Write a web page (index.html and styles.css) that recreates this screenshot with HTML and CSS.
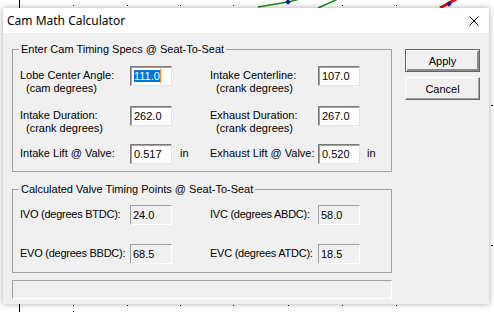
FILE: index.html
```html
<!DOCTYPE html>
<html lang="en">
<head>
    <meta charset="UTF-8">
    <meta name="viewport" content="width=device-width, initial-scale=1.0">
    <title>Cam Math Calculator</title>
    <link rel="stylesheet" href="styles.css">
</head>
<body>
    <!-- chart that sits behind the dialog -->
    <svg class="chart" width="494" height="312" viewBox="0 0 494 312">
        <line x1="19.5" y1="0" x2="19.5" y2="312" stroke="#000" stroke-width="1"/>
        <g fill="#000">
            <rect x="73" y="5" width="1" height="1"/>
            <rect x="127" y="5" width="1" height="1"/>
            <rect x="180" y="5" width="1" height="1"/>
            <rect x="233" y="5" width="1" height="1"/>
            <rect x="342" y="5" width="1" height="1"/>
            <rect x="396" y="5" width="1" height="1"/>
            <rect x="73" y="305" width="1" height="1"/>
            <rect x="73" y="311" width="1" height="1"/>
            <rect x="127" y="305" width="1" height="1"/>
            <rect x="180" y="305" width="1" height="1"/>
            <rect x="233" y="305" width="1" height="1"/>
            <rect x="288" y="305" width="1" height="1"/>
            <rect x="342" y="305" width="1" height="1"/>
            <rect x="396" y="305" width="1" height="1"/>
            <rect x="491" y="105" width="2" height="1"/>
            <rect x="491" y="245" width="2" height="1"/>
        </g>
        <polyline points="258,7 288,2 300,-1" fill="none" stroke="#1a8a1a" stroke-width="1.5"/>
        <polyline points="318,8 338,-1" fill="none" stroke="#1a8a1a" stroke-width="1.5"/>
        <polyline points="440,8 458,-2" fill="none" stroke="#e01010" stroke-width="3"/>
        <rect x="286" y="0" width="4" height="4" fill="#1a1a8a" transform="rotate(45 288 2)"/>
        <rect x="447" y="2" width="4" height="4" fill="#1a1a8a" transform="rotate(45 449 4)"/>
    </svg>

    <div class="dialog">
        <div class="titlebar">
            <span class="title">Cam Math Calculator</span>
            <svg class="close" width="10" height="10" viewBox="0 0 10 10">
                <path d="M0.5 0.5 L9.5 9.5 M9.5 0.5 L0.5 9.5" stroke="#000" stroke-width="1" fill="none"/>
            </svg>
        </div>

        <div class="dialog-body">
            <div class="main">
                <fieldset class="group specs">
                    <legend>Enter Cam Timing Specs @ Seat-To-Seat</legend>
                    <div class="fields">
                        <div class="label">Lobe Center Angle:<span class="sub">(cam degrees)</span></div>
                        <div class="edit"><span class="selected">111.0</span><span class="caret"></span></div>
                        <div></div>
                        <div class="label">Intake Centerline:<span class="sub">(crank degrees)</span></div>
                        <div class="edit">107.0</div>
                        <div></div>

                        <div class="label">Intake Duration:<span class="sub">(crank degrees)</span></div>
                        <div class="edit">262.0</div>
                        <div></div>
                        <div class="label">Exhaust Duration:<span class="sub">(crank degrees)</span></div>
                        <div class="edit">267.0</div>
                        <div></div>

                        <div class="label">Intake Lift @ Valve:</div>
                        <div class="edit">0.517</div>
                        <div class="unit">in</div>
                        <div class="label">Exhaust Lift @ Valve:</div>
                        <div class="edit">0.520</div>
                        <div class="unit unit-right">in</div>
                    </div>
                </fieldset>

                <fieldset class="group results">
                    <legend>Calculated Valve Timing Points @ Seat-To-Seat</legend>
                    <div class="fields">
                        <div class="label">IVO (degrees BTDC):</div>
                        <div class="edit readonly">24.0</div>
                        <div></div>
                        <div class="label">IVC (degrees ABDC):</div>
                        <div class="edit readonly">58.0</div>
                        <div></div>

                        <div class="label">EVO (degrees BBDC):</div>
                        <div class="edit readonly">68.5</div>
                        <div></div>
                        <div class="label">EVC (degrees ATDC):</div>
                        <div class="edit readonly">18.5</div>
                        <div></div>
                    </div>
                </fieldset>

                <div class="status"></div>
            </div>

            <div class="buttons">
                <button class="btn default">Apply</button>
                <button class="btn">Cancel</button>
            </div>
        </div>
    </div>
</body>
</html>
```

FILE: styles.css
```css
body {
    margin: 0;
    width: 494px;
    height: 312px;
    overflow: hidden;
    position: relative;
    background-color: #fff;
    font-family: "Liberation Sans", Arial, sans-serif;
    font-size: 11px;
    color: #000;
}
.chart {
    position: absolute;
    left: 0;
    top: 0;
}
.dialog {
    position: absolute;
    left: 3px;
    top: 8px;
    width: 486px;
    height: 296px;
    background-color: #f0f0f0;
    box-shadow: 0 0 6px rgba(0,0,0,0.35);
    display: flex;
    flex-direction: column;
}
.titlebar {
    height: 25px;
    flex: none;
    background-color: #fff;
    display: flex;
    align-items: center;
    justify-content: space-between;
    padding: 0 10px 0 4px;
}
.title {
    font-family: "Noto Sans", "Liberation Sans", sans-serif;
    font-size: 12px;
}
.dialog-body {
    flex: 1;
    display: flex;
    padding: 10px 9px 0 9px;
}
.main {
    width: 380px;
}
.group {
    margin: 0;
    padding: 10px 0 7px 0;
    border: 1px solid #a0a0a0;
    min-width: 0;
}
.group legend {
    margin-left: 6px;
    padding: 0 2px;
    line-height: 13px;
}
.results {
    margin-top: 11px;
    padding-top: 9px;
    padding-bottom: 8px;
}
.results .label {
    letter-spacing: -0.25px;
}
.fields {
    display: grid;
    grid-template-columns: 110px 42px 38px 108px 42px auto;
    margin-left: 7px;
}
.specs .fields {
    grid-template-rows: 40px 38px 20px;
}
.results .fields {
    grid-template-rows: 39px 20px;
}
.label {
    padding-top: 3px;
    line-height: 13px;
    white-space: nowrap;
}
.label .sub {
    display: block;
    padding-left: 6px;
}
.edit {
    height: 20px;
    box-sizing: border-box;
    background-color: #fff;
    border: 1px solid;
    border-color: #7a7a7a #e3e3e3 #e3e3e3 #7a7a7a;
    box-shadow: inset 1px 1px 0 #a0a0a0;
    padding: 2px 0 0 3px;
    line-height: 14px;
    white-space: nowrap;
}
.edit.readonly {
    background-color: #f0f0f0;
    border-color: #a0a0a0 #fff #fff #a0a0a0;
    box-shadow: none;
    padding-left: 2px;
}
.selected {
    background-color: #0078d7;
    color: #fff;
}
.caret {
    display: inline-block;
    width: 1px;
    height: 14px;
    vertical-align: top;
    background-color: #ff8728;
}
.unit {
    padding: 3px 0 0 8px;
    line-height: 13px;
}
.unit-right {
    padding-left: 7px;
}
.status {
    margin-top: 7px;
    height: 19px;
    box-sizing: border-box;
    border: 1px solid;
    border-color: #a0a0a0 #fff #fff #a0a0a0;
}
.buttons {
    margin-left: 13px;
    margin-top: 6px;
    display: flex;
    flex-direction: column;
    gap: 5px;
}
.btn {
    width: 75px;
    height: 23px;
    box-sizing: border-box;
    padding: 0;
    font-family: inherit;
    font-size: 11px;
    color: #000;
    background-color: #f0f0f0;
    border: 1px solid;
    border-color: #fff #696969 #696969 #fff;
    box-shadow: inset -1px -1px 0 #a0a0a0;
}
.btn.default {
    border-color: #646464;
    box-shadow: inset 1px 1px 0 #fff, inset -2px -2px 0 #8a8a8a;
}
```
